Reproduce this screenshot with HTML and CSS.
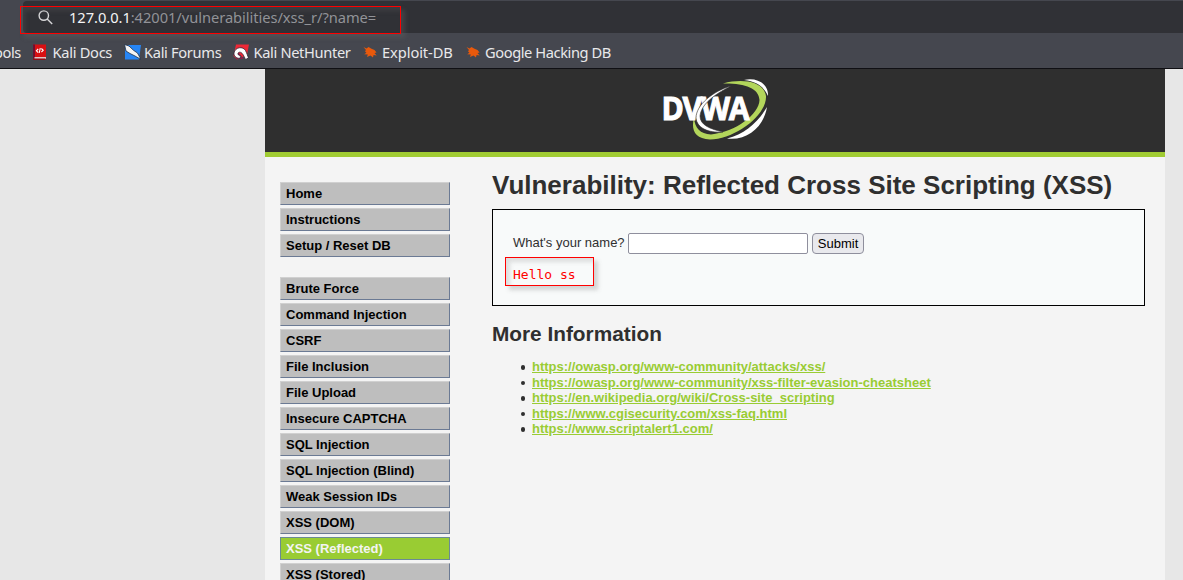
FILE: index.html
```html
<!DOCTYPE html>
<html lang="en">
<head>
<meta charset="utf-8">
<title>Vulnerability: Reflected Cross Site Scripting (XSS)</title>
<link rel="stylesheet" href="styles.css">
</head>
<body>
<div class="chrome">
  <div class="toolbar">
    <div class="address">
      <svg class="search" width="15" height="15" viewBox="0 0 15 15" fill="none" stroke="#d6d6d8" stroke-width="1.4"><circle cx="5.8" cy="5.6" r="4.7"/><path d="M9.2 9l5 5"/></svg>
      <span class="url"><b>127.0.0.1</b>:42001/vulnerabilities/xss_r/?name=</span>
    </div>
    <div class="mark mark-url"></div>
  </div>
  <div class="bookmarks">
    <span class="bm bm-tools">ools</span>
    <svg class="icon i-docs" width="16" height="16" viewBox="0 0 16 16"><path d="M2 .5h13v12.500H2z" fill="#d90f12"/><path d="M2 .5h2v14H2z" fill="#6d1030"/><path d="M3.500 13H15v2H3.500z" fill="#e0c4c6"/><path d="M2 14.500h12.500V16H2z" fill="#8f0d16"/><path d="M7.200 5L5.400 6.800l1.800 1.700M10.400 4.500l1.800 1.800-1.800 1.700M9.300 4.200L8.200 9" stroke="#fff" fill="none" stroke-width="1.100"/></svg>
    <span class="bm bm-docs">Kali Docs</span>
    <svg class="icon i-forums" width="17" height="16" viewBox="0 0 17 16"><path d="M1 1h16l-2 14.500H1z" fill="#2685f5"/><path d="M.5.5L5 2l4.500 4.300 4 2.700 3.500 6.500-6-3.500L6 9.500 2 7z" fill="#f4f4f4" stroke="#1d3048" stroke-width=".8"/></svg>
    <span class="bm bm-forums">Kali Forums</span>
    <svg class="icon i-hunter" width="16" height="16" viewBox="0 0 16 16"><path d="M3 .5h13L14 11 4 15.500.5 12z" fill="#ee2937"/><path d="M.5 10l3 5h7L6 9z" fill="#8e1c49"/><path d="M1 9C2 3 10 2 12.500 6.500c1.500 3 2 5 3 7.500l-3 1.500C10.500 11 9 8 6.500 8.200c-2.500.3-2 3.500 1.500 3.800l-1 2.300C3.500 14.500.5 12 1 9z" fill="#fff" stroke="#332334" stroke-width=".8"/></svg>
    <span class="bm bm-hunter">Kali NetHunter</span>
    <svg class="icon i-bug" width="14" height="12" viewBox="0 0 14 12"><path d="M.5 1l3 1.400L5.500 1l3 1.800 3 1.200 2 2.500-2 .4 2.200 2.600-3.200-.6-.5 2.600-2.500-2-3.500 1.500L4.800 8.500l-3.600-.3 2.200-1.400L1.800 5l1.400-.8z" fill="#e9590c"/></svg>
    <span class="bm bm-exploit">Exploit-DB</span>
    <svg class="icon i-bug" width="14" height="12" viewBox="0 0 14 12"><path d="M.5 1l3 1.400L5.500 1l3 1.800 3 1.200 2 2.500-2 .4 2.200 2.600-3.200-.6-.5 2.600-2.500-2-3.500 1.500L4.800 8.500l-3.600-.3 2.200-1.400L1.800 5l1.400-.8z" fill="#e9590c"/></svg>
    <span class="bm bm-google">Google Hacking DB</span>
  </div>
</div>
<div class="container">
  <header class="header">
    <svg class="logo" width="110" height="64" viewBox="0 0 110 64">
      <path d="M82 1C95-2 107 5 106 17 102 8 96 3 82 1z" fill="#fff"/>
      <path d="M105 28C102 47 86 62 65 59.500 83 55 96 43 105 28z" fill="#fff"/>
      <path d="M61 4.500C82-1 102 3 104 17 105 36 73 60 48 60.500 32 60 29 50 32 39 33 49 38 55 49 55.500 74 53 97 35 97.500 21 97 9 82 4 61 4.500z" fill="#b3d65b"/>
      <text class="logo-text" transform="translate(-.5 41) scale(.915 1)">DVWA</text>
      <path d="M69 7C51 12 34 26 34 39c1 10 12 15 27 14C48 50 38 46 38 37 39 26 51 16 69 7z" fill="#fff" stroke="#2f2f2f" stroke-width=".6"/>
    </svg>
  </header>
  <div class="content">
    <nav class="menu">
      <ul><li>Home</li><li>Instructions</li><li>Setup / Reset DB</li></ul>
      <ul><li>Brute Force</li><li>Command Injection</li><li>CSRF</li><li>File Inclusion</li><li>File Upload</li><li>Insecure CAPTCHA</li><li>SQL Injection</li><li>SQL Injection (Blind)</li><li>Weak Session IDs</li><li>XSS (DOM)</li><li class="selected">XSS (Reflected)</li><li>XSS (Stored)</li></ul>
    </nav>
    <main class="main">
      <h1>Vulnerability: Reflected Cross Site Scripting (XSS)</h1>
      <section class="vulnerable">
        <form class="form"><label for="name">What's your name?</label><input id="name" class="name" type="text"><button class="submit" type="button">Submit</button></form>
        <pre class="hello">Hello ss</pre>
        <div class="mark mark-hello"></div>
      </section>
      <h2>More Information</h2>
      <ul class="links">
        <li><a href="#">https://owasp.org/www-community/attacks/xss/</a></li>
        <li><a href="#">https://owasp.org/www-community/xss-filter-evasion-cheatsheet</a></li>
        <li><a href="#">https://en.wikipedia.org/wiki/Cross-site_scripting</a></li>
        <li><a href="#">https://www.cgisecurity.com/xss-faq.html</a></li>
        <li><a href="#">https://www.scriptalert1.com/</a></li>
      </ul>
    </main>
  </div>
</div>
</body>
</html>
```
FILE: styles.css
```css
* { box-sizing: border-box; }
body { margin: 0; height: 580px; overflow: hidden; background: #e7e7e7; color: #2f2f2f; font: 13px/15px "Liberation Sans", Arial, sans-serif; }
.chrome { height: 69px; background: #45474f; border-bottom: 1px solid #101014; font-family: "Noto Sans", sans-serif; }
.toolbar { position: relative; height: 33px; padding: 1px 0 0 23px; }
.address { display: flex; align-items: center; height: 32px; padding-left: 15px; background: #303136; border-radius: 4px 0 0 4px; }
.search { flex: none; margin-right: 16px; }
.url { color: #929398; font-size: 14.67px; letter-spacing: -.04px; white-space: nowrap; }
.url b { color: #f5f5f6; font-weight: 400; }
.mark { position: absolute; }
.mark-url { left: 20px; top: 6px; width: 381px; height: 28px; border: 1px solid #f00; box-shadow: 4px 4px 4px rgba(100,100,100,.35), inset 4px 4px 4px rgba(100,100,100,.25); }
.bookmarks { display: flex; align-items: center; height: 35px; padding-top: 3px; overflow: hidden; color: #e9e9eb; font-size: 14.67px; letter-spacing: -.39px; line-height: 20px; white-space: nowrap; }
.bm { flex: none; }
.icon { flex: none; }
.bm-tools { width: 33px; margin-left: -6px; margin-right: 4px; }
.i-docs { margin-right: 5.500px; }
.bm-docs { width: 71px; letter-spacing: -.3px; }
.i-forums { margin-right: 3.500px; }
.bm-forums { width: 88.500px; letter-spacing: -.33px; }
.i-hunter { margin-right: 5px; }
.bm-hunter { width: 109px; letter-spacing: -.35px; }
.i-bug { margin-right: 5.500px; }
.bm-exploit { width: 83.500px; letter-spacing: -.08px; }
.bm-google { letter-spacing: -.42px; }
.container { width: 900px; height: 511px; margin-left: 265px; background: #f4f4f4; }
.header { height: 88px; padding: 10px 0 0 397px; background: #2f2f2f; border-bottom: 5px solid #a1cc33; }
.logo { display: block; overflow: visible; }
.logo-text { font: 700 33px "Open Sans", sans-serif; letter-spacing: -1.4px; fill: #fff; stroke: #fff; stroke-width: 1px; }
.content { display: flex; padding-left: 15px; }
.menu { width: 170px; padding-top: 25px; font-weight: 700; color: #000; }
.menu ul { margin: 0 0 20px; padding: 0; list-style: none; }
.menu li { height: 23px; margin-bottom: 3px; padding: 3px 5px; line-height: 16px; background: #bebebe; border: 1px solid; border-color: #d0d0d0 #6b7a94 #6b7a94 #d0d0d0; }
.menu .selected { background: #9c3; color: #f4f4f4; border-color: #6b8a94; }
.main { width: 653px; margin-left: 42px; }
h1 { margin: 13px 0 9px; font-size: 26px; line-height: 30px; white-space: nowrap; }
.vulnerable { position: relative; height: 97px; padding: 23px 20px 0; border: 1px solid #000; background: #f8fafa; }
.form { display: flex; height: 21px; }
.form label { padding-top: 2px; }
.name { width: 180px; height: 21px; margin: 0 4px 0 3px; border: 1px solid #8f8f9d; border-radius: 2px; background: #fff; }
.submit { width: 52px; height: 21px; padding: 0 0 0 1px; border: 1px solid #8f8f9d; border-radius: 4px; background: #e9e9ed; color: #000; font: 13px "Liberation Sans", sans-serif; }
.hello { margin: 13px 0 0; color: #f00; font: 13px/15px "DejaVu Sans Mono", monospace; }
.mark-hello { left: 12px; top: 47px; width: 89px; height: 29px; border: 1px solid #f00; box-shadow: 4px 4px 4px rgba(100,100,100,.25), inset 4px 4px 4px rgba(100,100,100,.18); }
h2 { margin: 16px 0 13px; font-size: 20.8px; line-height: 24px; }
.links { margin: 0; padding-left: 40px; line-height: 15.6px; list-style: none; }
.links li { display: flex; align-items: center; }
.links li::before { content: ""; width: 4.5px; height: 4.5px; margin: 1px 7px 0 -11.5px; border-radius: 50%; background: #2f2f2f; }
.links a { color: #9c3; font-weight: 700; }
```
